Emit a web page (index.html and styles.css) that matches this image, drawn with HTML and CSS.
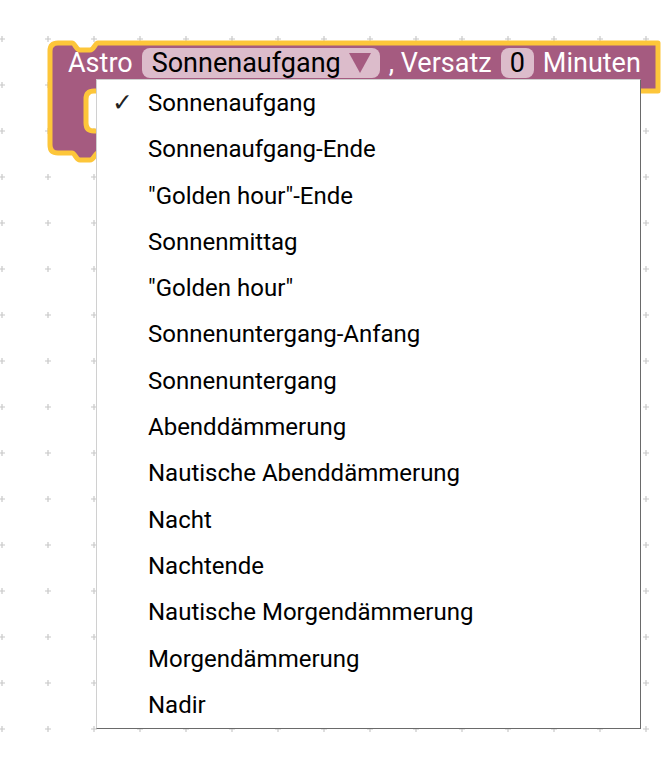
FILE: index.html
```html
<!DOCTYPE html>
<html lang="de">
<head>
    <meta charset="UTF-8">
    <meta name="viewport" content="width=device-width, initial-scale=1.0">
    <title>Astro Block</title>
    <link rel="stylesheet" href="styles.css">
</head>
<body>
    <div class="workspace">
        <svg class="canvas" width="668" height="767" viewBox="0 0 668 767">
            <defs>
                <pattern id="grid" x="-21" y="16" width="46" height="46" patternUnits="userSpaceOnUse">
                    <path d="M20 23h6M23 20v6" stroke="#c8c8c8" stroke-width="1.2"/>
                </pattern>
            </defs>
            <rect x="0" y="0" width="668" height="767" fill="url(#grid)"/>
            <!-- selected block outline -->
            <path class="block-shape"
                  d="M50 51 Q50 43 58 43 H72 C75 43 76 50 80 50 H90 C94 50 95 43 98 43
                     H658 V91 H94 Q86 91 86 99 V123 Q86 131 94 131 H220 V153
                     H98 C95 153 94 160 90 160 H80 C76 160 75 153 72 153
                     H58 Q50 153 50 145 Z"/>
        </svg>

        <div class="block-row">
            <span class="label">Astro</span>
            <span class="field dropdown">Sonnenaufgang<svg class="arrow" width="22" height="20" viewBox="0 0 22 20"><path d="M0 0H22L11 20Z"/></svg></span>
            <span class="label">, Versatz</span>
            <span class="field number">0</span>
            <span class="label">Minuten</span>
        </div>

        <ul class="menu">
            <li class="selected">Sonnenaufgang</li>
            <li>Sonnenaufgang-Ende</li>
            <li>"Golden hour"-Ende</li>
            <li>Sonnenmittag</li>
            <li>"Golden hour"</li>
            <li>Sonnenuntergang-Anfang</li>
            <li>Sonnenuntergang</li>
            <li>Abenddämmerung</li>
            <li>Nautische Abenddämmerung</li>
            <li>Nacht</li>
            <li>Nachtende</li>
            <li>Nautische Morgendämmerung</li>
            <li>Morgendämmerung</li>
            <li>Nadir</li>
        </ul>
    </div>
</body>
</html>
```

FILE: styles.css
```css
body {
    margin: 0;
    background-color: #fff;
    font-family: Roboto, "Noto Sans", sans-serif;
}

.workspace {
    position: relative;
    width: 668px;
    height: 767px;
    overflow: hidden;
}

.canvas {
    position: absolute;
    left: 0;
    top: 0;
}

.block-shape {
    fill: #a55b80;
    stroke: #fdc63a;
    stroke-width: 5;
    stroke-linejoin: round;
}

.block-row {
    position: absolute;
    left: 68px;
    top: 48px;
    height: 30px;
    display: flex;
    align-items: center;
    gap: 9px;
    font-size: 27px;
    white-space: nowrap;
}

.label {
    color: #fff;
}

.field {
    display: flex;
    align-items: center;
    height: 30px;
    background-color: #dcbccb;
    color: #000;
    border-radius: 8px;
}

.dropdown {
    padding: 0 9px 0 10px;
    gap: 8px;
}

.arrow {
    fill: #a55b80;
}

.number {
    padding: 0 9px;
}

.menu {
    position: absolute;
    left: 96px;
    top: 79px;
    width: 543px;
    margin: 0;
    padding: 0;
    list-style: none;
    background-color: #fff;
    border: 1px solid #d0d0d0;
    border-right-color: #6a6a6a;
    border-bottom-color: #6a6a6a;
    font-size: 24px;
    color: #000;
}

.menu li {
    position: relative;
    height: 46.3px;
    line-height: 46.3px;
    padding-left: 51px;
}

.menu li.selected::before {
    content: "\2713";
    position: absolute;
    left: 15px;
    top: 0;
    color: #222;
    font-family: "DejaVu Sans", sans-serif;
    font-size: 25px;
    font-weight: bold;
}
```
